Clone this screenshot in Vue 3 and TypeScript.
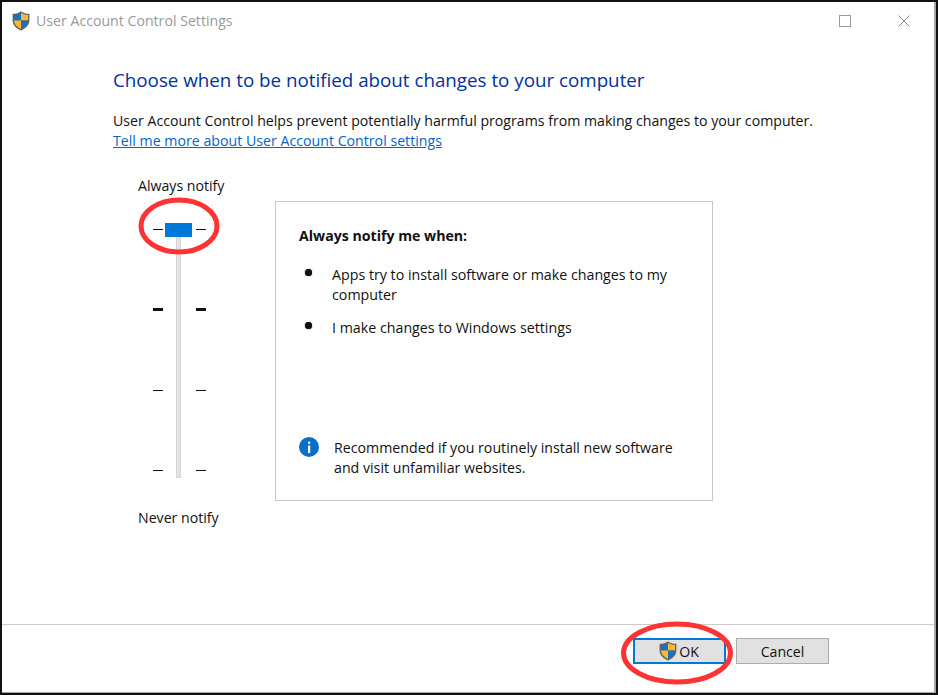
<script setup lang="ts">
const ticks: boolean[] = [false, true, false, false]
const bullets: string[] = [
  'Apps try to install software or make changes to my computer',
  'I make changes to Windows settings',
]
const shieldPaths = {
  outline: 'M9 0.3 C6.5 2.2 4 2.8 0.6 2.8 V9.5 C0.6 14 4.5 17.6 9 19.6 C13.5 17.6 17.4 14 17.4 9.5 V2.8 C14 2.8 11.5 2.2 9 0.3 Z',
  blueA: 'M9 1.8 C6.8 3.4 4.6 4 1.9 4 V9.6 H9 Z',
  gold: 'M9 1.8 C11.2 3.4 13.4 4 16.1 4 V9.6 H9 Z',
  goldB: 'M2 9.6 H9 V18 C5.4 16.4 2.3 13.4 2 9.6 Z',
  blueB: 'M16 9.6 H9 V18 C12.6 16.4 15.7 13.4 16 9.6 Z',
}
</script>

<template>
  <div class="window">
    <header class="titlebar">
      <svg class="shield" width="18" height="20" viewBox="0 0 18 20">
        <path :d="shieldPaths.outline" fill="#5f6468" />
        <path :d="shieldPaths.blueA" fill="#1b6fc4" />
        <path :d="shieldPaths.gold" fill="#fdb92c" />
        <path :d="shieldPaths.goldB" fill="#fdb92c" />
        <path :d="shieldPaths.blueB" fill="#1b6fc4" />
      </svg>
      <span class="title">User Account Control Settings</span>
      <div class="controls">
        <svg width="12" height="12" viewBox="0 0 12 12"><rect x="0.5" y="0.5" width="11" height="11" fill="none" stroke="#999" /></svg>
        <svg width="12" height="12" viewBox="0 0 12 12"><path d="M0.5 0.5 L11.5 11.5 M11.5 0.5 L0.5 11.5" stroke="#8a8a8a" fill="none" /></svg>
      </div>
    </header>

    <main class="content">
      <h1>Choose when to be notified about changes to your computer</h1>
      <p class="intro">User Account Control helps prevent potentially harmful programs from making changes to your computer.</p>
      <a class="link" href="#">Tell me more about User Account Control settings</a>

      <div class="panel-row">
        <section class="slider">
          <div class="slider-label">Always notify</div>
          <div class="scale">
            <div class="track"></div>
            <div class="thumb"></div>
            <div v-for="(bold, i) in ticks" :key="i" class="tick-row">
              <span class="tick" :class="{ bold }"></span>
              <span class="tick" :class="{ bold }"></span>
            </div>
          </div>
          <div class="slider-label bottom">Never notify</div>
        </section>

        <section class="info-box">
          <div class="box-title">Always notify me when:</div>
          <ul>
            <li v-for="b in bullets" :key="b">{{ b }}</li>
          </ul>
          <div class="recommend">
            <svg width="20" height="20" viewBox="0 0 20 20">
              <circle cx="10" cy="10" r="10" fill="#0a6fc9" />
              <rect x="9" y="8.5" width="2.2" height="7.5" fill="#fff" />
              <rect x="9" y="4.6" width="2.2" height="2.2" fill="#fff" />
            </svg>
            <p>Recommended if you routinely install new software and visit unfamiliar websites.</p>
          </div>
        </section>
      </div>
    </main>

    <footer class="footer">
      <button class="btn ok">
        <svg class="btn-shield" width="18" height="20" viewBox="0 0 18 20">
          <path :d="shieldPaths.outline" fill="#5f6468" />
          <path :d="shieldPaths.blueA" fill="#1b6fc4" />
          <path :d="shieldPaths.gold" fill="#fdb92c" />
          <path :d="shieldPaths.goldB" fill="#fdb92c" />
          <path :d="shieldPaths.blueB" fill="#1b6fc4" />
        </svg>OK
      </button>
      <button class="btn">Cancel</button>
    </footer>

    <svg class="mark mark-a" width="84" height="58" viewBox="0 0 84 58">
      <ellipse cx="42" cy="29" rx="38" ry="26" fill="none" stroke="#ff3333" stroke-width="5" />
    </svg>
    <svg class="mark mark-b" width="114" height="64" viewBox="0 0 114 64">
      <ellipse cx="57" cy="32" rx="53.5" ry="29" fill="none" stroke="#ff3333" stroke-width="5" />
    </svg>
  </div>
</template>

<style>
html, body { margin: 0; background: #fff; }
</style>

<style scoped>
.window {
  position: relative;
  box-sizing: border-box;
  width: 938px;
  height: 695px;
  border: 2px solid #111;
  box-shadow: inset -2px -1px 0 #a6a6a6;
  background: #fff;
  display: flex;
  flex-direction: column;
  font-family: "Open Sans", "Noto Sans", sans-serif;
  font-size: 14.15px;
  color: #111;
  overflow: hidden;
}
.titlebar {
  display: flex;
  align-items: center;
  height: 37px;
  padding: 0 26px 0 10px;
  flex: none;
}
.shield { margin-right: 6px; }
.title { color: #9a9a9a; font-size: 14.15px; }
.controls { margin-left: auto; display: flex; gap: 47px; }
.content { flex: 1; padding: 26px 0 0 111px; min-height: 0; }
h1 {
  margin: 0 0 16px;
  font-size: 18.78px;
  font-weight: 400;
  line-height: 30px;
  color: #003399;
}
.intro { margin: 0; line-height: 20px; white-space: nowrap; }
.link { display: block; font-size: 14.18px; line-height: 20px; color: #0066cc; text-decoration: underline; }
.panel-row { display: flex; margin-top: 22px; }
.slider { width: 137px; margin-left: 25px; flex: none; }
.slider-label { line-height: 20px; margin-top: 3px; }
.slider-label.bottom { margin-top: 30px; }
.scale {
  position: relative;
  width: 53px;
  height: 282px;
  margin: 0 0 0 15px;
  padding-top: 33px;
  box-sizing: border-box;
  display: flex;
  flex-direction: column;
  gap: 79.33px;
}
.track {
  position: absolute;
  left: 23px;
  top: 35px;
  width: 5px;
  height: 247px;
  background: #e3e3e3;
  border: 1px solid #d6d6d6;
  box-sizing: border-box;
}
.thumb {
  position: absolute;
  left: 12px;
  top: 27px;
  width: 27px;
  height: 14px;
  background: #0078d7;
}
.tick-row { display: flex; justify-content: space-between; height: 1px; position: relative; }
.tick { width: 10px; height: 1px; background: #111; }
.tick.bold { height: 3px; margin-top: -1px; }
.info-box {
  box-sizing: border-box;
  width: 438px;
  height: 300px;
  margin-top: 28px;
  border: 1px solid #c8c8c8;
  padding: 24px 23px 0;
  display: flex;
  flex-direction: column;
}
.box-title { font-weight: 700; line-height: 20px; }
ul { margin: 19px 0 0; padding: 0; list-style: none; font-size: 14.24px; }
li { position: relative; padding-left: 33px; line-height: 20px; margin-bottom: 13px; max-width: 340px; }
li::before {
  content: "";
  position: absolute;
  left: 6px;
  top: 4px;
  width: 7px;
  height: 7px;
  border-radius: 50%;
  background: #111;
  box-shadow: 0 0 1px #111;
}
.recommend { display: flex; gap: 15px; margin-top: auto; margin-bottom: 22px; font-size: 14.2px; }
.recommend svg { flex: none; margin-top: -1px; }
.recommend p { margin: 0; line-height: 20px; width: 350px; }
.footer {
  flex: none;
  height: 68px;
  margin-right: 2px;
  margin-bottom: 1px;
  border-top: 1px solid #ccc;
  display: flex;
  justify-content: flex-end;
  align-items: flex-start;
  gap: 10px;
  padding: 13px 105px 0 0;
  box-sizing: border-box;
}
.btn {
  box-sizing: border-box;
  width: 93px;
  height: 26px;
  padding: 0;
  background: #e1e1e1;
  border: 1px solid #adadad;
  font: inherit;
  color: #111;
  display: flex;
  align-items: center;
  justify-content: center;
}
.btn.ok { border: 2px solid #0078d7; padding-right: 1px; }
.btn-shield { margin-right: 2px; }
.mark { position: absolute; pointer-events: none; }
.mark-a { left: 135px; top: 195px; }
.mark-b { left: 618px; top: 619px; }
</style>
